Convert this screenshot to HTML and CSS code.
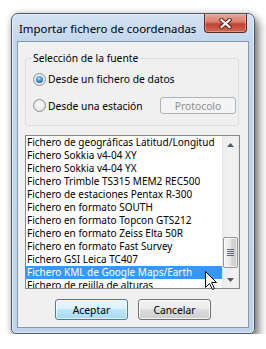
FILE: index.html
```html
<!DOCTYPE html>
<html lang="es">
<head>
    <meta charset="UTF-8">
    <meta name="viewport" content="width=device-width, initial-scale=1.0">
    <title>Importar fichero de coordenadas</title>
    <link rel="stylesheet" href="styles.css">
</head>
<body>
    <div class="window">
        <div class="titlebar">
            <span class="title">Importar fichero de coordenadas</span>
            <button class="close" type="button" aria-label="Cerrar">
                <svg width="13" height="11" viewBox="0 0 13 11">
                    <path d="M2.5 2L10.5 9M10.5 2L2.5 9" stroke="#5a231d" stroke-width="4.2" stroke-linecap="square" fill="none"/>
                    <path d="M2.5 2L10.5 9M10.5 2L2.5 9" stroke="#fff" stroke-width="2.2" stroke-linecap="square" fill="none"/>
                </svg>
            </button>
        </div>

        <div class="client">
            <fieldset class="group">
                <legend>Selección de la fuente</legend>
                <label class="option first"><span class="radio checked"></span>Desde un fichero de datos</label>
                <div class="option-row">
                    <label class="option"><span class="radio"></span>Desde una estación</label>
                    <button class="btn small" type="button" disabled>Protocolo</button>
                </div>
            </fieldset>

            <div class="listbox">
                <ul class="items">
                    <li>Fichero de geográficas Latitud/Longitud</li>
                    <li>Fichero Sokkia v4-04 XY</li>
                    <li>Fichero Sokkia v4-04 YX</li>
                    <li>Fichero Trimble TS315 MEM2 REC500</li>
                    <li>Fichero de estaciones Pentax R-300</li>
                    <li>Fichero en formato SOUTH</li>
                    <li>Fichero en formato Topcon GTS212</li>
                    <li>Fichero en formato Zeiss Elta 50R</li>
                    <li>Fichero en formato Fast Survey</li>
                    <li>Fichero GSI Leica TC407</li>
                    <li class="selected">Fichero KML de Google Maps/Earth</li>
                    <li>Fichero de rejilla de alturas</li>
                </ul>
                <div class="scrollbar">
                    <div class="sb-btn">
                        <svg width="7" height="4" viewBox="0 0 7 4"><path d="M0 4L3.5 0L7 4Z" fill="#4d5a68"/></svg>
                    </div>
                    <div class="sb-track">
                        <div class="thumb"><span class="grip"></span></div>
                    </div>
                    <div class="sb-btn">
                        <svg width="7" height="4" viewBox="0 0 7 4"><path d="M0 0L3.5 4L7 0Z" fill="#4d5a68"/></svg>
                    </div>
                </div>
            </div>

            <div class="actions">
                <button class="btn default" type="button">Aceptar</button>
                <button class="btn" type="button">Cancelar</button>
            </div>
        </div>
    </div>

    <svg class="cursor" width="13" height="20" viewBox="0 0 13 20">
        <path d="M0.5 0.5L0.5 16.5L4.5 12.5L7.5 18.5L9.5 17.5L6.5 11.5L11.5 11.5Z" fill="#fff" stroke="#000" stroke-width="1" stroke-linejoin="miter"/>
    </svg>
</body>
</html>
```

FILE: styles.css
```css
* {
    box-sizing: border-box;
}

body {
    margin: 0;
    background: #fff;
    font-family: "Noto Sans", "Open Sans", sans-serif;
    font-size: 10.3px;
    color: #000;
}

.window {
    width: 244px;
    height: 321px;
    margin: 13px 0 0 11px;
    border: 1px solid #4b5869;
    border-radius: 7px 7px 5px 5px;
    background: linear-gradient(#d4e2f2, #c2d6ec 28px, #bfd3ea);
    box-shadow: 4px 6px 10px rgba(0, 0, 0, 0.5), 0 0 6px rgba(0, 0, 0, 0.2), inset 0 0 0 1px rgba(255, 255, 255, 0.55);
    display: flex;
    flex-direction: column;
}

.titlebar {
    height: 27px;
    display: flex;
    align-items: center;
    padding: 1px 7px 0 7px;
    flex: none;
}

.title {
    font-size: 11.4px;
    flex: 1;
    white-space: nowrap;
}

.close {
    align-self: flex-start;
    margin-top: -1px;
    width: 43px;
    height: 19px;
    padding: 0;
    border: 1px solid #5e2923;
    border-top: none;
    border-radius: 0 0 4px 4px;
    background: linear-gradient(#e8a898, #d77d6b 45%, #c2412d 55%, #cf6a56);
    box-shadow: inset 0 0 0 1px rgba(255, 200, 190, 0.45);
    display: flex;
    align-items: center;
    justify-content: center;
}

.client {
    flex: 1;
    margin: 0 5px 5px;
    border: 1px solid #8798ac;
    background: #f0f0f0;
    padding: 9px 7px 0;
}

.group {
    width: 214px;
    margin: 0;
    padding: 0 2px 11px 7px;
    border: 1px solid #d5dfe5;
    border-radius: 3px;
}

.group legend {
    padding: 0 1px;
    margin-left: -1px;
    line-height: 14px;
}

.option {
    display: flex;
    align-items: center;
    height: 16px;
    white-space: nowrap;
}

.option.first {
    margin-top: 6px;
}

.option-row {
    display: flex;
    align-items: center;
    height: 17px;
    margin-top: 10px;
}

.radio {
    width: 13px;
    height: 13px;
    border-radius: 50%;
    border: 1px solid #8e8f8f;
    background: radial-gradient(circle at 50% 40%, #fdfdfd, #e4e4e4 70%, #d6d6d6);
    margin-right: 2px;
    flex: none;
    display: flex;
    align-items: center;
    justify-content: center;
}

.radio.checked::after {
    content: "";
    width: 7px;
    height: 7px;
    border-radius: 50%;
    background: radial-gradient(circle at 45% 35%, #b8e4ff 0, #3a93e0 45%, #16468a 100%);
}

.btn {
    font-family: inherit;
    font-size: 10.3px;
    color: #000;
    width: 73px;
    height: 21px;
    padding: 0;
    border: 1px solid #707070;
    border-radius: 3px;
    background: linear-gradient(#f2f2f2, #ebebeb 50%, #dddddd 50%, #cfcfcf);
    box-shadow: inset 0 0 0 1px rgba(255, 255, 255, 0.8);
}

.btn.small {
    margin-left: auto;
    width: 76px;
    height: 17px;
    border-color: #adb2b5;
    background: #f4f4f4;
    color: #8d8d8d;
    box-shadow: none;
}

.btn.default {
    border-color: #3c7fb1;
    background: linear-gradient(#eaf6fd, #d9f0fc 50%, #bee6fd 50%, #a7d9f5);
    box-shadow: inset 0 0 0 1px rgba(255, 255, 255, 0.7);
}

.listbox {
    margin-top: 9px;
    width: 215px;
    height: 154px;
    border: 1px solid #828790;
    background: #fff;
    display: flex;
}

.items {
    flex: 1;
    list-style: none;
    margin: 0;
    padding: 0;
    overflow: hidden;
    font-size: 10px;
}

.items li {
    height: 13px;
    line-height: 13px;
    padding-left: 1px;
    white-space: nowrap;
}

.items li.selected {
    background: #3399ff;
    color: #fff;
}

.scrollbar {
    width: 17px;
    display: flex;
    flex-direction: column;
    background: linear-gradient(to right, #e3e3e3, #eeeeee 2px, #f2f2f2 14px, #e6e6e6);
}

.sb-btn {
    height: 17px;
    display: flex;
    align-items: center;
    justify-content: center;
    flex: none;
}

.sb-track {
    flex: 1;
    padding: 84px 1px 0;
}

.thumb {
    height: 31px;
    border: 1px solid #979797;
    border-radius: 2px;
    background: linear-gradient(to right, #f4f4f4, #e6e6e6 50%, #d8d8d8 50%, #cbcbcb);
    box-shadow: inset 0 0 0 1px rgba(255, 255, 255, 0.6);
    display: flex;
    align-items: center;
    justify-content: center;
}

.grip {
    width: 7px;
    height: 7px;
    background: repeating-linear-gradient(#5f6a75 0 1px, transparent 1px 2px);
}

.actions {
    margin-top: 10px;
    display: flex;
    justify-content: center;
    gap: 10px;
}

.cursor {
    position: absolute;
    left: 205px;
    top: 271px;
}
```
